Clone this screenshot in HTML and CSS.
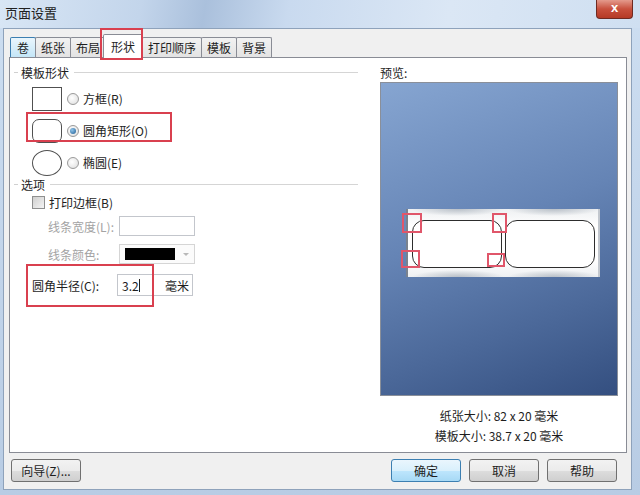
FILE: index.html
```html
<!DOCTYPE html>
<html lang="zh-CN">
<head>
    <meta charset="UTF-8">
    <meta name="viewport" content="width=device-width, initial-scale=1.0">
    <title>页面设置</title>
    <link rel="stylesheet" href="styles.css">
</head>
<body>

    <div class="window">
        <div class="titlebar">
            <span class="title">页面设置</span>
            <div class="close">x</div>
        </div>

        <div class="client">
            <div class="tabs">
                <div class="tab hover">卷</div>
                <div class="tab">纸张</div>
                <div class="tab">布局</div>
                <div class="tab active">形状</div>
                <div class="tab">打印顺序</div>
                <div class="tab">模板</div>
                <div class="tab">背景</div>
            </div>

            <div class="panel">
                <div class="left">
                    <div class="group"><span class="dash"></span><span>模板形状</span><span class="rule"></span></div>

                    <div class="shape-row first">
                        <span class="shape square"></span>
                        <span class="radio"></span>
                        <span>方框(R)</span>
                    </div>
                    <div class="shape-row">
                        <span class="shape rounded"></span>
                        <span class="radio checked"></span>
                        <span>圆角矩形(O)</span>
                    </div>
                    <div class="shape-row">
                        <span class="shape ellipse"></span>
                        <span class="radio"></span>
                        <span>椭圆(E)</span>
                    </div>

                    <div class="group second"><span class="dash"></span><span>选项</span><span class="rule"></span></div>

                    <div class="check-row">
                        <span class="checkbox"></span>
                        <span>打印边框(B)</span>
                    </div>
                    <div class="field-row width-row">
                        <span class="label muted">线条宽度(L):</span>
                        <span class="textbox"></span>
                    </div>
                    <div class="field-row color-row">
                        <span class="label muted">线条颜色:</span>
                        <span class="combo"><span class="swatch"></span><span class="arrow"></span></span>
                    </div>
                    <div class="field-row radius-row">
                        <span class="label wide">圆角半径(C):</span>
                        <span class="textbox value"><span class="num">3.2</span><span class="caret"></span><span class="unit">毫米</span></span>
                    </div>
                </div>

                <div class="right">
                    <div class="preview-label">预览:</div>
                    <div class="preview">
                        <div class="strip">
                            <div class="label-card"></div>
                            <div class="label-card"></div>
                        </div>
                    </div>
                    <div class="size-info">纸张大小: 82 x 20 毫米</div>
                    <div class="size-info">模板大小: 38.7 x 20 毫米</div>
                </div>
            </div>

            <div class="footer">
                <button class="btn">向导(Z)...</button>
                <div class="spacer"></div>
                <button class="btn default">确定</button>
                <button class="btn">取消</button>
                <button class="btn">帮助</button>
            </div>
        </div>

        <!-- annotation boxes -->
        <div class="mark" style="left:100px;top:28px;width:43px;height:32px"></div>
        <div class="mark" style="left:26px;top:112px;width:146px;height:30px"></div>
        <div class="mark" style="left:26px;top:264px;width:128px;height:43px"></div>
        <div class="mark thin" style="left:402px;top:213px;width:20px;height:20px"></div>
        <div class="mark thin" style="left:492px;top:213px;width:15px;height:20px"></div>
        <div class="mark thin" style="left:401px;top:250px;width:19px;height:18px"></div>
        <div class="mark thin" style="left:487px;top:253px;width:18px;height:14px"></div>
    </div>

</body>
</html>
```

FILE: styles.css
```css
body {
    margin: 0;
    font-family: "Noto Sans CJK SC", "Liberation Sans", sans-serif;
    font-size: 12px;
    color: #1e1e1e;
}
.window {
    position: relative;
    width: 640px;
    height: 495px;
    overflow: hidden;
    display: flex;
    flex-direction: column;
    background: linear-gradient(to bottom, #cddef1, #b8cce4);
}
.titlebar {
    height: 28px;
    display: flex;
    align-items: flex-start;
    background: linear-gradient(100deg, #d8e6f5 0%, #c3d5eb 22%, #aac0dc 32%, #c9daef 45%, #dbe7f5 70%, #cfdff1 100%);
}
.title {
    margin: 3px 0 0 5px;
    font-size: 13px;
    color: #202020;
}
.close {
    margin-left: auto;
    margin-right: 7px;
    width: 35px;
    height: 18px;
    border: 1px solid #6e2a22;
    border-top: none;
    border-radius: 0 0 4px 4px;
    background: linear-gradient(to bottom, #e49a8c, #c8503d 50%, #b53a26);
    color: white;
    font-family: "Liberation Sans", sans-serif;
    font-weight: bold;
    font-size: 13px;
    text-align: center;
    line-height: 16px;
}
.client {
    flex: 1;
    margin: 0 8px 5px 3px;
    background: #f0f0f0;
    border: 1px solid #8ea2bb;
    display: flex;
    flex-direction: column;
}
.tabs {
    display: flex;
    align-items: flex-end;
    padding: 4px 0 0 6px;
    height: 24px;
}
.tab {
    height: 19px;
    line-height: 19px;
    padding: 0 5px;
    margin-right: -1px;
    border: 1px solid #898c95;
    border-bottom: none;
    border-radius: 2px 2px 0 0;
    background: linear-gradient(to bottom, #f2f2f2, #e3e3e3);
    font-size: 12px;
}
.tab.hover {
    padding: 0 6px;
    background: linear-gradient(to bottom, #eaf6fd, #c4e6f7);
    border-color: #3c7fb1;
}
.tab.active {
    height: 23px;
    line-height: 23px;
    padding: 0 7px;
    margin: 0 -1px -1px -2px;
    background: white;
    position: relative;
}
.panel {
    height: 396px;
    box-sizing: border-box;
    margin: 0 4px 0 5px;
    background: white;
    border: 1px solid #898c95;
    display: flex;
    padding: 6px 0 0 4px;
}
.left {
    width: 344px;
}
.group {
    display: flex;
    align-items: center;
    height: 16px;
    gap: 3px;
}
.group .dash {
    width: 4px;
    height: 1px;
    background: #d0d0d0;
}
.group .rule {
    flex: 1;
    height: 1px;
    background: #d5d5d5;
    margin-left: 2px;
}
.group.second {
    margin-top: 1px;
}
.shape-row {
    display: flex;
    align-items: center;
    height: 25px;
    margin-top: 7px;
    padding-left: 18px;
}
.shape-row.first {
    margin-top: 6px;
}
.shape {
    width: 28px;
    height: 22px;
    border: 1px solid #505050;
    margin-right: 5px;
}
.rounded {
    border-radius: 7px;
}
.ellipse {
    height: 24px;
    border-radius: 50%;
}
.radio {
    width: 10px;
    height: 10px;
    border: 1px solid #9a9a9a;
    border-radius: 50%;
    background: radial-gradient(circle at 40% 40%, #ffffff, #dcdcdc);
    margin-right: 4px;
    position: relative;
}
.radio.checked::after {
    content: "";
    position: absolute;
    left: 2px;
    top: 2px;
    width: 6px;
    height: 6px;
    border-radius: 50%;
    background: radial-gradient(circle at 35% 35%, #8fc4ea, #1f5d94);
}
.check-row {
    display: flex;
    align-items: center;
    height: 16px;
    margin-top: 2px;
    padding-left: 18px;
}
.checkbox {
    width: 11px;
    height: 11px;
    border: 1px solid #8e8f8f;
    background: linear-gradient(135deg, #cfcfcf, #f4f4f4);
    margin-right: 4px;
}
.field-row {
    display: flex;
    align-items: center;
    height: 20px;
    padding-left: 34px;
}
.width-row {
    margin-top: 6px;
}
.color-row {
    margin-top: 8px;
}
.radius-row {
    margin-top: 10px;
    height: 22px;
    padding-left: 18px;
}
.label {
    width: 71px;
}
.label.wide {
    width: 85px;
}
.muted {
    color: #a3a3a3;
}
.textbox {
    width: 74px;
    height: 18px;
    border: 1px solid #c3c6cc;
    background: white;
}
.textbox.value {
    height: 20px;
    display: flex;
    align-items: center;
    padding: 0 3px 0 4px;
    width: 67px;
}
.caret {
    width: 1px;
    height: 13px;
    background: #222;
}
.unit {
    margin-left: auto;
}
.combo {
    height: 18px;
    border: 1px solid #d5d5d5;
    background: #fbfbfb;
    display: flex;
    align-items: center;
    padding-left: 5px;
    width: 69px;
}
.swatch {
    width: 50px;
    height: 12px;
    background: #000;
}
.arrow {
    margin-left: auto;
    margin-right: 5px;
    width: 0;
    height: 0;
    border-left: 3px solid transparent;
    border-right: 3px solid transparent;
    border-top: 3px solid #b8b8b8;
}
.right {
    margin-left: 22px;
    width: 238px;
}
.preview-label {
    height: 16px;
    line-height: 16px;
    margin-top: 1px;
}
.preview {
    margin-top: 1px;
    height: 314px;
    box-sizing: border-box;
    border: 1px solid #8a8f99;
    background: linear-gradient(160deg, #86a5d1 0%, #6584b5 45%, #4b6899 75%, #344f80 100%);
    display: flex;
    align-items: center;
    justify-content: center;
    padding: 8px 0 0 8px;
}
.strip {
    width: 194px;
    height: 68px;
    box-sizing: border-box;
    display: flex;
    gap: 3px;
    padding: 11px 3px 9px 4px;
    background:
        radial-gradient(ellipse 46px 7px at 50px 0, #b9c0c8, transparent),
        radial-gradient(ellipse 46px 7px at 146px 0, #b9c0c8, transparent),
        radial-gradient(ellipse 46px 7px at 50px 100%, #b9c0c8, transparent),
        radial-gradient(ellipse 46px 7px at 146px 100%, #b9c0c8, transparent),
        linear-gradient(to bottom, #eef0f2 0%, #ffffff 25%, #ffffff 75%, #eef0f2 100%);
    border-left: 2px solid #7a828e;
    border-right: 2px solid #c2c7ce;
}
.label-card {
    flex: 1;
    background: white;
    border: 1.5px solid #2d2d2d;
    border-radius: 12px;
}
.size-info {
    text-align: center;
    height: 20px;
    line-height: 20px;
}
.preview + .size-info {
    margin-top: 10px;
}
.footer {
    display: flex;
    gap: 8px;
    padding: 6px 14px 0 7px;
}
.spacer {
    flex: 1;
}
.btn {
    width: 70px;
    height: 23px;
    padding: 0;
    font-family: inherit;
    font-size: 12px;
    color: #1e1e1e;
    border: 1px solid #707070;
    border-radius: 3px;
    background: linear-gradient(to bottom, #f2f2f2 0%, #ebebeb 50%, #dddddd 51%, #cfcfcf 100%);
}
.btn.default {
    border-color: #3c7fb1;
    background: linear-gradient(to bottom, #eaf6fd 0%, #d9f0fc 50%, #bee6fd 51%, #a7d9f5 100%);
}
.mark {
    position: absolute;
    border: 2px solid #d9404f;
    box-sizing: border-box;
}
.mark.thin {
    border-color: #e0566a;
}
```
